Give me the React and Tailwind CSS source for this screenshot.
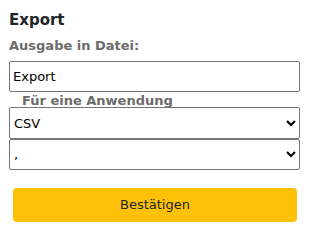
export default function App() {
  return (
    <div className="w-[310px] h-[236px] bg-white font-['DejaVu_Sans',sans-serif] text-black">
      <div className="pl-[9px] pr-[10px] pt-[11px]">
        <h2 className="text-[15px] leading-[18px] font-bold text-[#212529]">Export</h2>
        <p className="mt-[9px] text-[13px] leading-[16px] font-bold text-[#6c6c6c]">Ausgabe in Datei:</p>
        <input
          className="mt-[7px] block w-full h-[31px] border border-[#767676] rounded-[2px] px-[3px] text-[13px] outline-none"
          defaultValue="Export"
        />
        <p className="pl-[13px] mt-[2px] text-[13px] leading-[13px] font-bold text-[#6c6c6c]">Für eine Anwendung</p>
        <select className="block w-full h-[32px] border border-[#767676] rounded-[2px] px-0 text-[13px]" defaultValue="CSV">
          <option>CSV</option>
        </select>
        <select className="block w-full h-[31px] border border-[#767676] rounded-[2px] px-0 text-[13px]" defaultValue=",">
          <option>,</option>
        </select>
        <button className="mt-[18px] ml-[4px] block w-[284px] h-[34px] rounded-[4px] bg-[#ffc107] text-[13px] text-[#212529]">
          Bestätigen
        </button>
      </div>
    </div>
  );
}
